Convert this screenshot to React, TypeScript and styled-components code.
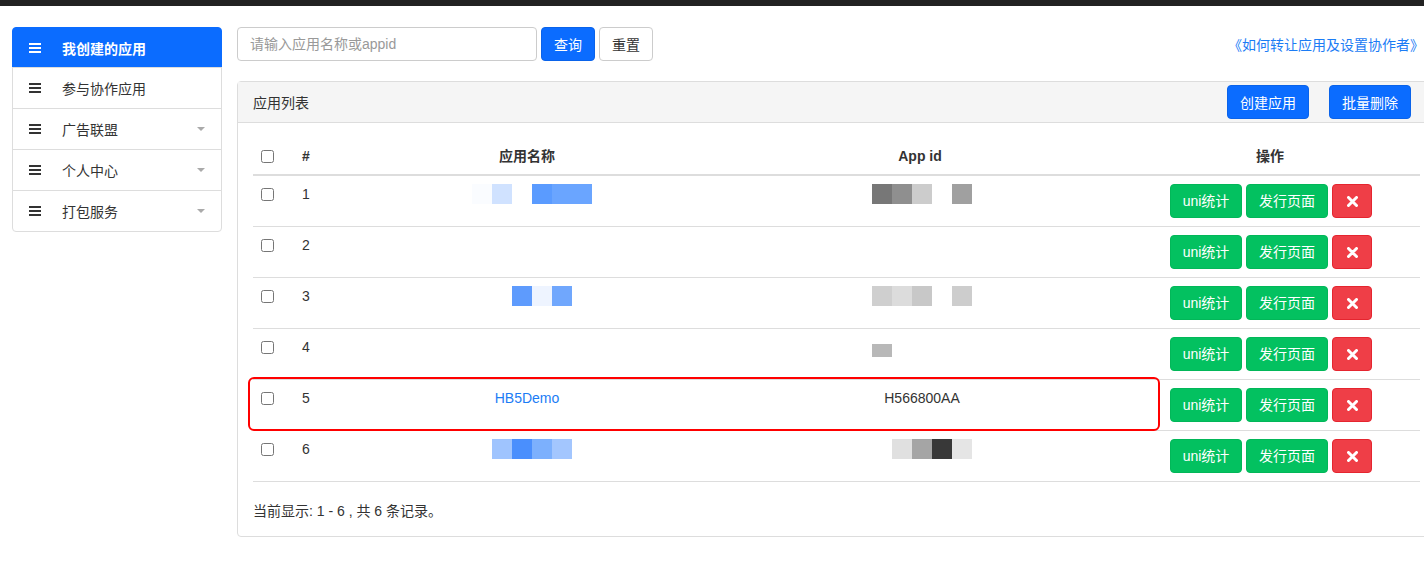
import styled, { createGlobalStyle } from "styled-components"

const GlobalStyle = createGlobalStyle`
  body {
    margin: 0;
    font-family: "Liberation Sans", "Noto Sans CJK SC", sans-serif;
    font-size: 14px;
    color: #333;
    background: #fff;
    overflow: hidden;
  }
`

const TopBar = styled.div`
  height: 6px;
  background: #222;
`

const Layout = styled.div`
  display: flex;
  align-items: flex-start;
  gap: 15px;
  padding: 21px 0 0 12px;
  width: max-content;
`

const Sidebar = styled.ul`
  width: 210px;
  margin: 0;
  padding: 0;
  list-style: none;
`

const NavItem = styled.li<{ $active?: boolean }>`
  position: relative;
  display: flex;
  align-items: center;
  gap: 21px;
  height: 40px;
  padding: 0 16px;
  margin-bottom: -1px;
  border: 1px solid ${(p) => (p.$active ? "#0b6cff" : "#ddd")};
  background: ${(p) => (p.$active ? "#0b6cff" : "#fff")};
  color: ${(p) => (p.$active ? "#fff" : "#333")};
  font-weight: ${(p) => (p.$active ? 600 : 400)};

  &:first-child {
    height: 39px;
    border-radius: 4px 4px 0 0;
  }
  &:last-child {
    border-radius: 0 0 4px 4px;
  }
`

const Caret = styled.span`
  margin-left: auto;
  width: 0;
  height: 0;
  border-left: 4px solid transparent;
  border-right: 4px solid transparent;
  border-top: 4px solid #aaa;
`

const Main = styled.div`
  width: 1199px;
`

const Toolbar = styled.div`
  display: flex;
  align-items: center;
  gap: 4px;
`

const SearchInput = styled.input`
  box-sizing: border-box;
  width: 300px;
  height: 34px;
  padding: 6px 12px;
  border: 1px solid #ccc;
  border-radius: 4px;
  font: inherit;
  color: #555;

  &::placeholder {
    color: #999;
  }
`

const Button = styled.button<{ $variant?: "primary" | "default" | "success" | "danger"; $w?: number }>`
  box-sizing: border-box;
  height: 34px;
  width: ${(p) => (p.$w ? `${p.$w}px` : "auto")};
  padding: 0 4px;
  white-space: nowrap;
  border-radius: 4px;
  font: inherit;
  font-size: 14px;
  cursor: pointer;
  display: inline-flex;
  align-items: center;
  justify-content: center;
  border: 1px solid;
  ${(p) => {
    switch (p.$variant) {
      case "primary":
        return `background: #0b6cff; border-color: #0a63ea; color: #fff;`
      case "success":
        return `background: #03c160; border-color: #02b759; color: #fff;`
      case "danger":
        return `background: #ef3e47; border-color: #e5252f; color: #fff;`
      default:
        return `background: #fff; border-color: #ccc; color: #333;`
    }
  }}
`

const HelpLink = styled.a`
  margin-left: auto;
  margin-right: 12px;
  color: #1b7cf5;
  text-decoration: none;
`

const Panel = styled.div`
  margin-top: 20px;
  border: 1px solid #ddd;
  border-radius: 4px;
`

const PanelHeader = styled.div`
  display: flex;
  align-items: center;
  gap: 20px;
  height: 40px;
  padding: 0 24px 0 15px;
  background: #f5f5f5;
  border-bottom: 1px solid #ddd;
`

const PanelTitle = styled.span`
  margin-right: auto;
`

const PanelBody = styled.div`
  padding: 15px;
`

const TableWrap = styled.div`
  position: relative;
`

const Table = styled.table`
  width: 100%;
  table-layout: fixed;
  border-collapse: collapse;
`

const Th = styled.th<{ $align?: string }>`
  padding: 8px;
  line-height: 20px;
  font-weight: 600;
  text-align: ${(p) => p.$align || "center"};
  border-bottom: 2px solid #ddd;
`

const Td = styled.td<{ $align?: string }>`
  padding: 8px;
  line-height: 20px;
  vertical-align: top;
  text-align: ${(p) => p.$align || "center"};
  border-bottom: 1px solid #ddd;
`

const Check = styled.input`
  width: 13px;
  height: 13px;
  margin: 4px 0 0;
  vertical-align: top;
`

const Actions = styled.div`
  display: flex;
  justify-content: center;
  gap: 4px;
  padding-left: 2px;
`

const AppLink = styled.a`
  color: #1b7cf5;
  text-decoration: none;
`

const AppId = styled.span`
  margin-left: 4px;
`

const Mosaic = styled.div<{ $shift: number; $h?: number; $top?: number }>`
  display: inline-flex;
  margin-left: ${(p) => p.$shift}px;
  margin-top: ${(p) => p.$top || 0}px;
  height: ${(p) => p.$h || 20}px;
  vertical-align: top;
`

const Tile = styled.span`
  width: 20px;
  height: 100%;
`

const Highlight = styled.div`
  position: absolute;
  left: -5px;
  top: 239px;
  width: 908px;
  height: 50px;
  border: 2px solid #ff0000;
  border-radius: 6px;
  pointer-events: none;
`

const Summary = styled.div`
  margin-top: 19px;
  line-height: 20px;
`

const MenuIcon = () => (
  <svg width="12" height="12" viewBox="0 0 12 12">
    <rect x="0" y="1" width="12" height="2" fill="currentColor" />
    <rect x="0" y="5" width="12" height="2" fill="currentColor" />
    <rect x="0" y="9" width="12" height="2" fill="currentColor" />
  </svg>
)

const CloseIcon = () => (
  <svg width="11" height="11" viewBox="0 0 11 11">
    <path d="M1.5 1.5 L9.5 9.5 M9.5 1.5 L1.5 9.5" stroke="#fff" strokeWidth="3" strokeLinecap="round" />
  </svg>
)

const navItems = [
  { label: "我创建的应用", active: true },
  { label: "参与协作应用" },
  { label: "广告联盟", caret: true },
  { label: "个人中心", caret: true },
  { label: "打包服务", caret: true },
]

type Row = {
  id: number
  name?: string
  nameTiles?: string[]
  appId?: string
  idTiles?: string[]
  idHeight?: number
  idTop?: number
}

// pixelated (blurred-out) names and ids from the original screenshot
const rows: Row[] = [
  {
    id: 1,
    nameTiles: ["#fafcff", "#d0e2ff", "transparent", "#5a9bff", "#6aa5ff", "#6aa5ff"],
    idTiles: ["#777", "#8f8f8f", "#ccc", "transparent", "#a0a0a0"],
  },
  { id: 2 },
  {
    id: 3,
    nameTiles: ["transparent", "transparent", "#5e9bfd", "#eef4ff", "#70a7fd", "transparent"],
    idTiles: ["#cfcfcf", "#dcdcdc", "#c8c8c8", "transparent", "#cdcdcd"],
  },
  { id: 4, idTiles: ["#b8b8b8", "transparent", "transparent", "transparent", "transparent"], idHeight: 13, idTop: 7 },
  { id: 5, name: "HB5Demo", appId: "H566800AA" },
  {
    id: 6,
    nameTiles: ["transparent", "#9fc4fe", "#4a8ffd", "#7cb0fd", "#a3c6fe", "transparent"],
    idTiles: ["transparent", "#e0e0e0", "#a5a5a5", "#383838", "#e5e5e5"],
  },
]

export default function App() {
  return (
    <>
      <GlobalStyle />
      <TopBar />
      <Layout>
        <Sidebar>
          {navItems.map((item) => (
            <NavItem key={item.label} $active={item.active}>
              <MenuIcon />
              {item.label}
              {item.caret && <Caret />}
            </NavItem>
          ))}
        </Sidebar>

        <Main>
          <Toolbar>
            <SearchInput placeholder="请输入应用名称或appid" />
            <Button $variant="primary" $w={54}>查询</Button>
            <Button $w={54}>重置</Button>
            <HelpLink href="#">《如何转让应用及设置协作者》</HelpLink>
          </Toolbar>

          <Panel>
            <PanelHeader>
              <PanelTitle>应用列表</PanelTitle>
              <Button $variant="primary" $w={82}>创建应用</Button>
              <Button $variant="primary" $w={82}>批量删除</Button>
            </PanelHeader>
            <PanelBody>
              <TableWrap>
                <Table>
                  <colgroup>
                    <col style={{ width: 41 }} />
                    <col style={{ width: 40 }} />
                    <col style={{ width: 386 }} />
                    <col style={{ width: 400 }} />
                    <col style={{ width: 300 }} />
                  </colgroup>
                  <thead>
                    <tr>
                      <Th $align="left"><Check type="checkbox" /></Th>
                      <Th $align="left">#</Th>
                      <Th>应用名称</Th>
                      <Th>App id</Th>
                      <Th>操作</Th>
                    </tr>
                  </thead>
                  <tbody>
                    {rows.map((r) => (
                      <tr key={r.id}>
                        <Td $align="left"><Check type="checkbox" /></Td>
                        <Td $align="left">{r.id}</Td>
                        <Td>
                          {r.name && <AppLink href="#">{r.name}</AppLink>}
                          {r.nameTiles && (
                            <Mosaic $shift={10}>
                              {r.nameTiles.map((c, i) => (
                                <Tile key={i} style={{ background: c }} />
                              ))}
                            </Mosaic>
                          )}
                        </Td>
                        <Td>
                          {r.appId && <AppId>{r.appId}</AppId>}
                          {r.idTiles && (
                            <Mosaic $shift={4} $h={r.idHeight} $top={r.idTop}>
                              {r.idTiles.map((c, i) => (
                                <Tile key={i} style={{ background: c }} />
                              ))}
                            </Mosaic>
                          )}
                        </Td>
                        <Td>
                          <Actions>
                            <Button $variant="success" $w={72}>uni统计</Button>
                            <Button $variant="success" $w={82}>发行页面</Button>
                            <Button $variant="danger" $w={40}><CloseIcon /></Button>
                          </Actions>
                        </Td>
                      </tr>
                    ))}
                  </tbody>
                </Table>
                <Highlight />
              </TableWrap>
              <Summary>当前显示: 1 - 6 , 共 6 条记录。</Summary>
            </PanelBody>
          </Panel>
        </Main>
      </Layout>
    </>
  )
}
